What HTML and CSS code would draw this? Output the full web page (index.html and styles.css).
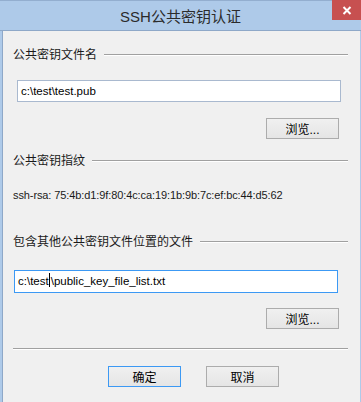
FILE: index.html
```html
<!DOCTYPE html>
<html lang="zh-CN">
<head>
  <meta charset="UTF-8" />
  <meta name="viewport" content="width=device-width, initial-scale=1" />
  <title>SSH公共密钥认证</title>
  <link rel="stylesheet" href="styles.css">
</head>
<body>

  <div class="window">
    <div class="titlebar">
      <span></span>
      <span class="title">SSH公共密钥认证</span>
      <button class="close" title="关闭">
        <svg width="10" height="9" viewBox="0 0 10 9">
          <path d="M1.5 1 L8.5 8 M8.5 1 L1.5 8" stroke="#fff" stroke-width="2" fill="none" />
        </svg>
      </button>
    </div>

    <div class="client">
      <!-- 公共密钥文件 -->
      <div class="group-label group-first">公共密钥文件名</div>
      <div class="textbox box-first">c:\test\test.pub</div>
      <div class="row-right row-browse1">
        <button class="btn">浏览...</button>
      </div>

      <!-- 指纹 -->
      <div class="group-label group-second">公共密钥指纹</div>
      <div class="fingerprint">ssh-rsa: 75:4b:d1:9f:80:4c:ca:19:1b:9b:7c:ef:bc:44:d5:62</div>

      <!-- 其他公共密钥文件列表 -->
      <div class="group-label group-third">包含其他公共密钥文件位置的文件</div>
      <div class="textbox box-second focused">c:\test<span class="caret"></span>\public_key_file_list.txt</div>
      <div class="row-right row-browse2">
        <button class="btn">浏览...</button>
      </div>

      <div class="separator"></div>

      <div class="dialog-buttons">
        <button class="btn btn-default">确定</button>
        <button class="btn">取消</button>
      </div>
    </div>
  </div>

</body>
</html>
```

FILE: styles.css
```css
/* janela estilo Windows 8 */
body {
  margin: 0;
  font-family: "Liberation Sans", "Noto Sans CJK SC", sans-serif;
  font-size: 12px;
  color: #000;
  background: #aecae9;
}

.window {
  height: 401px;
  border-top: 1px solid #93aecf;
  padding: 0 1px 0 2px;
  background: #aecae9;
  display: flex;
  flex-direction: column;
}

.titlebar {
  height: 29px;
  display: grid;
  grid-template-columns: 1fr auto 1fr;
  border-bottom: 1px solid #8ea8c8;
  margin-left: -2px;
  margin-right: -1px;
}

.title {
  font-size: 15px;
  line-height: 31px;
  color: #2b2b2b;
}

.close {
  justify-self: end;
  align-self: start;
  width: 29px;
  height: 20px;
  margin-top: -1px;
  border: none;
  padding: 0;
  background: #c75050;
  display: flex;
  align-items: center;
  justify-content: center;
}

.client {
  flex: 1;
  background: #f0f0f0;
  border-left: 1px solid #8ea8c8;
  padding: 16px 12px 0 10px;
}

/* rótulo do grupo com linha gravada */
.group-label {
  display: flex;
  align-items: center;
  line-height: 16px;
  height: 16px;
  color: #1a1a1a;
}
.group-label::after {
  content: "";
  flex: 1;
  height: 0;
  margin-left: 7px;
  border-top: 1px solid #a0a0a0;
  border-bottom: 1px solid #fff;
}

.group-second { margin-top: 14px; }
.group-third { margin-top: 31px; }

.textbox {
  height: 20px;
  line-height: 20px;
  border: 1px solid #a9b9cf;
  background: #fff;
  padding-left: 3px;
  font-size: 11.5px;
  white-space: nowrap;
}
.box-first {
  margin: 17px 7px 0 4px;
}
.box-second {
  height: 21px;
  line-height: 20px;
  margin: 20px 10px 0 1px;
}
.focused {
  border-color: #3c99f4;
}
.caret {
  display: inline-block;
  width: 1px;
  height: 14px;
  background: #000;
  vertical-align: -2px;
  margin: 0 1px 0 0;
}

.fingerprint {
  margin-top: 18px;
  line-height: 16px;
  font-size: 11px;
  letter-spacing: -0.1px;
  color: #1a1a1a;
}

.row-right {
  display: flex;
  justify-content: flex-end;
  padding-right: 9px;
}
.row-browse1 { margin-top: 16px; }
.row-browse2 { margin-top: 15px; }

.btn {
  width: 73px;
  height: 21px;
  padding: 0;
  border: 1px solid #acacac;
  background: linear-gradient(#f0f0f0, #e5e5e5);
  font-family: "Liberation Sans", "Noto Sans CJK SC", sans-serif;
  font-size: 12px;
  color: #000;
}
.btn-default {
  border-color: #3c99f4;
}

.separator {
  margin-top: 19px;
  border-top: 1px solid #a0a0a0;
  border-bottom: 1px solid #fff;
}

.dialog-buttons {
  display: flex;
  gap: 25px;
  margin-top: 16px;
  padding-left: 95px;
}
```
